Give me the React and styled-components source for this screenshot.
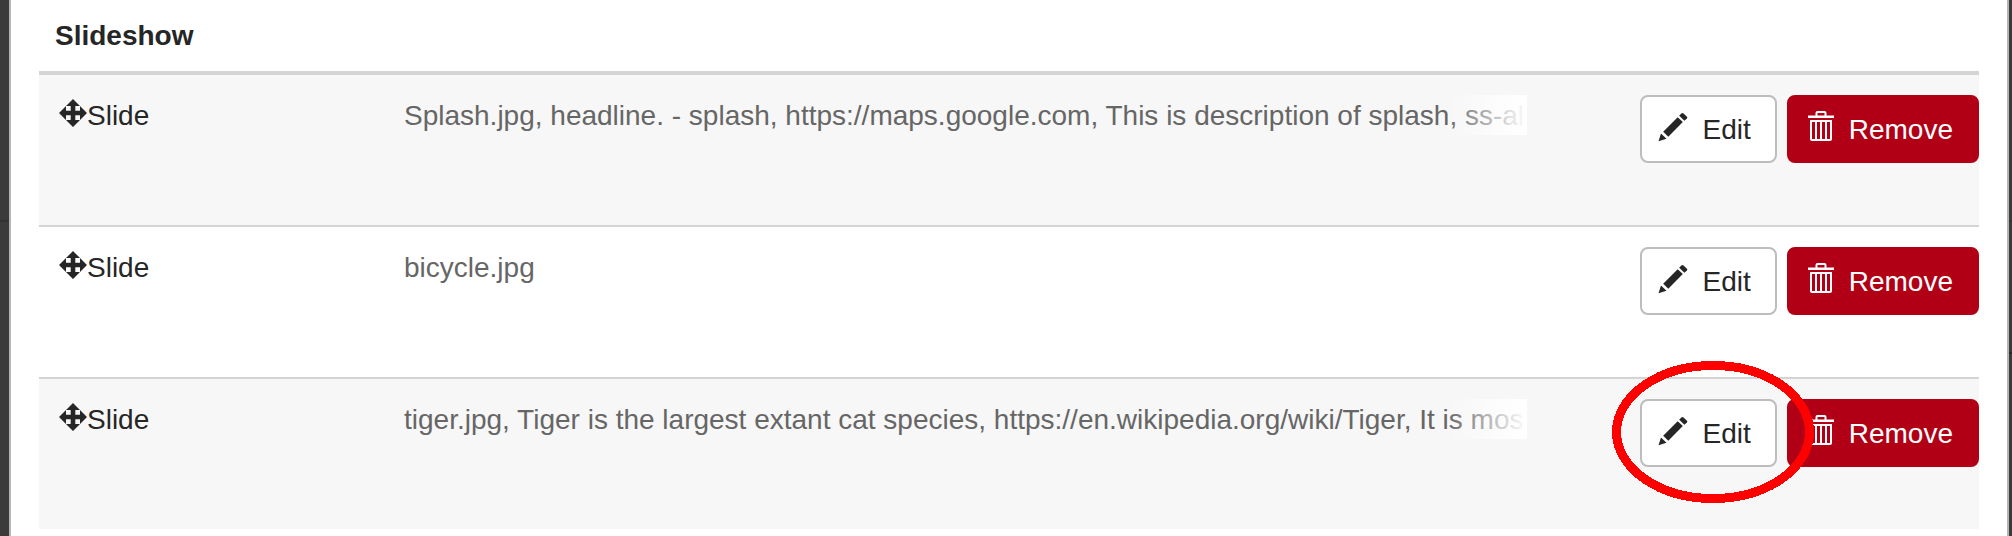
import React from "react";
import styled, { createGlobalStyle, css } from "styled-components";

const GlobalStyle = createGlobalStyle`
  *, *::before, *::after { box-sizing: border-box; }
  body {
    margin: 0;
    background: #3b3b3b;
    color: #262626;
    font: 28px/42px "Liberation Sans", Arial, Helvetica, sans-serif;
  }
`;

const Backdrop = styled.div`
  min-height: 100vh;
  display: flex;
  padding: 0 3px 0 9px;
  background:
    linear-gradient(transparent 352px, #28292a 352px, #28292a 354px, transparent 354px) right / 3px 100% no-repeat,
    linear-gradient(#3b3b3b 220px, #323232 220px, #323232 222px, #3b3b3b 222px);
`;

const Panel = styled.main`
  flex: 1;
  min-width: 0;
  padding: 0 28px;
  background: #fff;
  border: 2px solid #b5b5b5;
  border-width: 0 2px;
`;

const Table = styled.table`
  width: 100%;
  table-layout: fixed;
  border-spacing: 0;
`;

const NameCol = styled.col`
  width: 365px;
`;

const ActionsCol = styled.col`
  width: 452px;
`;

const HeadCell = styled.th`
  padding: 15px 16px 14px;
  text-align: left;
  font-weight: 700;
  border-bottom: 4px solid #d4d4d4;
`;

const Row = styled.tr`
  &:nth-child(odd) { background: #f7f7f7; }
  &:not(:last-child) > td { border-bottom: 2px solid #d4d4d4; }
`;

const Cell = styled.td`
  padding: 0;
  vertical-align: top;
`;

const Handle = styled.div`
  display: flex;
  align-items: flex-start;
  padding: 20px;
`;

const MoveIcon = styled.svg`
  width: 28px;
  height: 28px;
  margin-top: 4px;
  fill: currentColor;
`;

const Summary = styled.div`
  position: relative;
  margin-top: 20px;
  height: 40px;
  overflow: hidden;
  white-space: nowrap;
  color: #666;

  ${(p) => p.$faded && css`
    &::after {
      content: "";
      position: absolute;
      inset: 0 0 0 auto;
      width: 80px;
      background: linear-gradient(to right, rgba(255, 255, 255, 0), #fff);
    }
  `}
`;

const Actions = styled.div`
  display: flex;
  justify-content: flex-end;
  gap: 10px;
  min-height: 150px;
  padding-top: 20px;
  align-items: flex-start;
`;

const Button = styled.button`
  display: flex;
  align-items: flex-start;
  gap: 13px;
  padding: 12px 24px 10px 15px;
  font: inherit;
  border: 2px solid ${(p) => (p.$danger ? "#b10015" : "#bdbdbd")};
  border-radius: 8px;
  background: ${(p) => (p.$danger ? "#b10015" : "#fff")};
  color: ${(p) => (p.$danger ? "#fff" : "#262626")};
  cursor: pointer;
`;

const ButtonIcon = styled.svg`
  width: 32px;
  height: 36px;
  margin-top: 2px;
  fill: currentColor;
`;

const Marked = styled.div`
  position: relative;
`;

const Ring = styled.svg`
  position: absolute;
  top: -38px;
  left: -28px;
  width: 202px;
  height: 142px;
  fill: none;
  stroke: #f00;
  stroke-width: 9;
  pointer-events: none;
  z-index: 1;
`;

const slides = [
  { summary: "Splash.jpg, headline. - splash, https://maps.google.com, This is description of splash, ss-al", faded: true },
  { summary: "bicycle.jpg" },
  { summary: "tiger.jpg, Tiger is the largest extant cat species, https://en.wikipedia.org/wiki/Tiger, It is mos", faded: true, marked: true },
];

function EditButton() {
  return (
    <Button type="button">
      <ButtonIcon viewBox="0 0 32 36" aria-hidden="true">
        <path d="M1.500 30.200 L4 22.500 L9.500 27.700 Z" />
        <path d="M6.200 20.800 L20.700 6.200 L25.800 10.900 L11.300 25.700 Z" />
        <path d="M22.200 4.800 L24.300 2.600 Q25.400 1.600 26.500 2.600 L30 5.800 Q30.700 6.600 29.900 7.500 L27.400 9.800 Z" />
      </ButtonIcon>
      Edit
    </Button>
  );
}

function RemoveButton() {
  return (
    <Button type="button" $danger>
      <ButtonIcon viewBox="0 0 32 36" aria-hidden="true">
        <path d="M4 4.500 H11.500 V2 Q11.500 0 13.500 0 H20.500 Q22.500 0 22.500 2 V4.500 H30 V7 H4 Z M13.500 2 V4.500 H20.500 V2 Z" fillRule="evenodd" />
        <path d="M6 9 H28 V28 Q28 30 26 30 H8 Q6 30 6 28 Z M8 11 V28 H11 V11 Z M13 11 V28 H16 V11 Z M18 11 V28 H21 V11 Z M23 11 V28 H26 V11 Z" fillRule="evenodd" />
      </ButtonIcon>
      Remove
    </Button>
  );
}

function SlideRow({ slide }) {
  return (
    <Row>
      <Cell>
        <Handle>
          <MoveIcon viewBox="0 0 28 28" aria-hidden="true">
            <path d="M14 0 L21 7 H16.300 V11.700 H21 V7 L28 14 L21 21 V16.300 H16.300 V21 H21 L14 28 L7 21 H11.700 V16.300 H7 V21 L0 14 L7 7 V11.700 H11.700 V7 H7 Z" />
          </MoveIcon>
          <span>Slide</span>
        </Handle>
      </Cell>
      <Cell>
        <Summary $faded={slide.faded}>{slide.summary}</Summary>
      </Cell>
      <Cell>
        <Actions>
          <Marked>
            <EditButton />
            {slide.marked && (
              <Ring viewBox="0 0 202 142" shapeRendering="crispEdges" aria-hidden="true">
                <ellipse cx="101" cy="71" rx="96.500" ry="66.500" />
              </Ring>
            )}
          </Marked>
          <RemoveButton />
        </Actions>
      </Cell>
    </Row>
  );
}

export default function App() {
  return (
    <>
      <GlobalStyle />
      <Backdrop>
        <Panel>
          <Table>
            <colgroup>
              <NameCol />
              <col />
              <ActionsCol />
            </colgroup>
            <thead>
              <tr>
                <HeadCell colSpan={3}>Slideshow</HeadCell>
              </tr>
            </thead>
            <tbody>
              {slides.map((slide) => (
                <SlideRow key={slide.summary} slide={slide} />
              ))}
            </tbody>
          </Table>
        </Panel>
      </Backdrop>
    </>
  );
}
